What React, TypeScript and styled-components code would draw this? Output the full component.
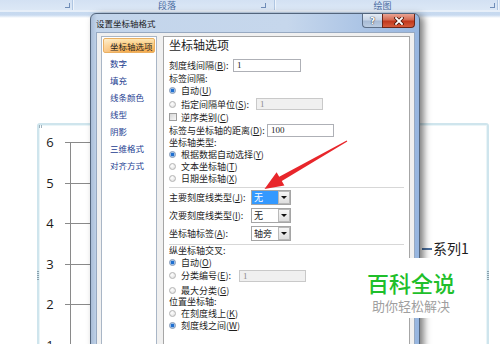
import React from 'react';
import styled, { createGlobalStyle } from 'styled-components';

const CJK = `"Noto Sans CJK SC", "Noto Sans", sans-serif`;

const GlobalStyle = createGlobalStyle`
  html, body {
    margin: 0;
    padding: 0;
    background: #fff;
  }
  body {
    font-family: ${CJK};
  }
`;

const Page = styled.div`
  position: relative;
  width: 500px;
  height: 344px;
  overflow: hidden;
  background: #fff;
`;

/* ---------- ribbon behind ---------- */

const Ribbon = styled.div`
  height: 10px;
  display: flex;
  background: linear-gradient(#d3e1f3, #dce8f6);
`;

const RibbonGroup = styled.div<{ $w: number; $pr?: number }>`
  width: ${({ $w }) => $w}px;
  flex-shrink: 0;
  display: flex;
  align-items: flex-end;
  box-sizing: border-box;
  border-right: 1px solid #afc6e2;
  box-shadow: 1px 0 0 #eef4fb;
  padding-right: ${({ $pr }) => $pr || 0}px;
`;

const RibbonLabel = styled.div`
  flex: 1;
  text-align: center;
  font-size: 9px;
  line-height: 9px;
  color: #4a6ca2;
`;

const Launcher = styled.span`
  width: 5px;
  height: 5px;
  margin: 0 2px 2px 0;
  border-right: 1px solid #6f8db8;
  border-bottom: 1px solid #6f8db8;
  box-sizing: border-box;
`;

const RibbonEdge = styled.div`
  height: 8px;
  background: linear-gradient(
    #e7eff9 0,
    #e7eff9 2px,
    #c6d9ef 2px,
    #c8daf0 5px,
    #ffffff 8px
  );
`;

/* ---------- chart behind ---------- */

const ChartFrame = styled.div`
  position: relative;
  margin: 105px 0 0 37px;
  width: 452px;
  height: 260px;
  box-sizing: border-box;
  border: 2px solid #cfe5ed;
  border-radius: 3px;
  box-shadow: inset 0 0 0 1px #eaf5f8;
  display: flex;
  background: #fff;
`;

const Handle = styled.span<{ $side: 'left' | 'right' }>`
  position: absolute;
  ${({ $side }) => ($side === 'left' ? 'left: -2px;' : 'right: -2px;')}
  top: 146px;
  width: 2px;
  height: 10px;
  background: repeating-linear-gradient(#8aa0ad 0 1px, transparent 1px 2px);
`;

const CornerDots = styled.span`
  position: absolute;
  left: 0;
  top: 0;
  width: 3px;
  height: 3px;
  background: repeating-linear-gradient(90deg, #9fb2bd 0 1px, transparent 1px 2px);
`;

const AxisBlock = styled.div`
  flex: 1;
  padding-top: 10px;
`;

const AxisRow = styled.div`
  display: flex;
  height: 40.6px;
`;

const AxisLabel = styled.div`
  width: 22px;
  flex-shrink: 0;
  text-align: center;
  font-family: "Open Sans", "Noto Sans", sans-serif;
  font-size: 13px;
  line-height: 14px;
  color: #1c1c1c;
`;

const Tick = styled.div`
  width: 5px;
  height: 1px;
  margin: 7px 0 0 4px;
  background: #8a8a8a;
`;

const GridCell = styled.div`
  flex: 1;
  margin-top: 7px;
  height: 40.6px;
  border-top: 1px solid #8a8a8a;
  border-left: 1px solid #8a8a8a;
`;

const Legend = styled.div`
  width: 68px;
  flex-shrink: 0;
  padding-top: 114px;
`;

const LegendItem = styled.div`
  display: flex;
  align-items: center;
  height: 18px;
  font-family: ${CJK};
  font-size: 14px;
  color: #1c1c1c;
`;

const LegendDash = styled.span`
  width: 10px;
  height: 2px;
  margin: 1px 1px 0 3px;
  background: #4a6f9f;
`;

/* ---------- dialog window ---------- */

const Window = styled.div`
  position: absolute;
  left: 90px;
  top: 13px;
  width: 330px;
  height: 345px;
  box-sizing: border-box;
  border: 1px solid #53657c;
  border-radius: 6px 6px 0 0;
  padding: 0 4px 0 5px;
  display: flex;
  flex-direction: column;
  background: linear-gradient(90deg, #a9bdd7 0, #c3d5eb 6px, #c6d7ec 60%, #97b6e0 100%);
  box-shadow: 4px 2px 7px rgba(0, 0, 0, 0.5);
`;

const TitleBar = styled.div`
  height: 18px;
  flex-shrink: 0;
  display: flex;
  align-items: flex-start;
`;

const Title = styled.div`
  flex: 1;
  font-size: 8.5px;
  line-height: 18px;
  color: #1b1b1b;
`;

const HelpButton = styled.div`
  width: 20px;
  height: 14px;
  box-sizing: border-box;
  border: 1px solid #5d6f88;
  border-top: none;
  border-right: none;
  border-radius: 0 0 0 4px;
  background: linear-gradient(#e2eaf4, #c9d6e7 45%, #a8bbd5 55%, #bccde2);
  display: flex;
  align-items: center;
  justify-content: center;
  font-family: "DejaVu Sans", sans-serif;
  font-size: 9px;
  font-weight: bold;
  color: #fff;
  text-shadow: 0 0 1px #1e2c40, 0 0 1px #1e2c40;
`;

const CloseButton = styled.div`
  width: 33px;
  height: 14px;
  box-sizing: border-box;
  border: 1px solid #6b2518;
  border-top: none;
  border-radius: 0 0 4px 0;
  background: linear-gradient(#eaa494, #d46a52 45%, #c0371c 55%, #d65c3c);
  display: flex;
  align-items: center;
  justify-content: center;
`;

const Body = styled.div`
  flex: 1;
  display: flex;
  gap: 6px;
  box-sizing: border-box;
  padding: 3px 4px;
  background: #f0f0f0;
  border: 1px solid #97a9c1;
  border-bottom: none;
`;

const Nav = styled.div`
  width: 56px;
  flex-shrink: 0;
  box-sizing: border-box;
  padding-top: 1px;
  background: #fff;
  border: 1px solid #a9b6c6;
`;

const NavItem = styled.div<{ $active?: boolean }>`
  box-sizing: border-box;
  height: ${({ $active }) => ($active ? 15 : 17)}px;
  margin: ${({ $active }) => ($active ? '0 1px 1px' : '0')};
  padding-left: ${({ $active }) => ($active ? 6 : 8)}px;
  border: ${({ $active }) => ($active ? '1px solid #eab062' : 'none')};
  border-radius: 2px;
  background: ${({ $active }) =>
    $active
      ? 'linear-gradient(90deg, rgba(255,255,255,0.35), rgba(255,255,255,0) 40%), linear-gradient(#fde6b4, #fbc677 50%, #f7ac4f)'
      : 'transparent'};
  display: flex;
  align-items: center;
  font-size: 8.5px;
  color: ${({ $active }) => ($active ? '#1e1e1e' : '#1b3d91')};
  white-space: nowrap;
`;

const Panel = styled.div`
  flex: 1;
  box-sizing: border-box;
  padding: 0 5px;
  background: #fff;
  border: 1px solid #a6a6a6;
  display: flex;
  flex-direction: column;
`;

const Heading = styled.div`
  height: 16px;
  font-size: 12px;
  line-height: 16px;
  color: #1e1e1e;
`;

const Row = styled.div<{ $h: number; $mt?: number }>`
  height: ${({ $h }) => $h}px;
  margin-top: ${({ $mt }) => $mt || 0}px;
  flex-shrink: 0;
  display: flex;
  align-items: center;
  font-size: 9px;
  line-height: ${({ $h }) => Math.min($h, 11)}px;
  color: #1e1e1e;
  white-space: nowrap;
`;

const Label = styled.span<{ $w?: number }>`
  ${({ $w }) => ($w ? `width: ${$w}px;` : '')}
  flex-shrink: 0;
  u {
    text-decoration: underline;
    text-underline-offset: 1px;
  }
`;

const Radio = styled.span<{ $on?: boolean }>`
  width: 7px;
  height: 7px;
  margin-right: 5px;
  flex-shrink: 0;
  box-sizing: border-box;
  border-radius: 50%;
  border: 1px solid ${({ $on }) => ($on ? '#7f95b3' : '#b3b3b3')};
  background: ${({ $on }) =>
    $on
      ? 'radial-gradient(circle, #1f6fd0 0 1.5px, #9cc0ea 2px, #e9f0f8 100%)'
      : 'radial-gradient(circle at 40% 35%, #ffffff, #dcdcdc)'};
`;

const Checkbox = styled.span`
  width: 8px;
  height: 8px;
  margin-right: 4px;
  flex-shrink: 0;
  box-sizing: border-box;
  border: 1px solid #9d9d9d;
  background: linear-gradient(135deg, #d6d6d6, #f7f7f7);
`;

const Input = styled.span<{ $w: number; $h: number; $disabled?: boolean }>`
  width: ${({ $w }) => $w}px;
  height: ${({ $h }) => $h}px;
  box-sizing: border-box;
  flex-shrink: 0;
  padding-left: 3px;
  border: 1px solid ${({ $disabled }) => ($disabled ? '#c9c9c9' : '#aeb0b6')};
  background: ${({ $disabled }) => ($disabled ? '#f0f0f0' : '#fff')};
  color: ${({ $disabled }) => ($disabled ? '#8c8c8c' : '#1e1e1e')};
  font-family: "Liberation Serif", serif;
  font-size: 9px;
  line-height: ${({ $h }) => $h - 2}px;
`;

const Select = styled.span`
  width: 40px;
  height: 15px;
  box-sizing: border-box;
  flex-shrink: 0;
  display: flex;
  border: 1px solid #a5a5a5;
  background: #fff;
`;

const SelectValue = styled.span<{ $focused?: boolean }>`
  flex: 1;
  padding-left: 2px;
  font-size: 9px;
  line-height: 13px;
  background: ${({ $focused }) => ($focused ? '#3399ff' : '#fff')};
  color: ${({ $focused }) => ($focused ? '#fff' : '#1e1e1e')};
`;

const SelectButton = styled.span`
  width: 12px;
  box-sizing: border-box;
  border: 1px solid #b9b9b9;
  background: linear-gradient(#f6f6f6, #dedede);
  display: flex;
  align-items: center;
  justify-content: center;
  &::after {
    content: '';
    border-left: 3px solid transparent;
    border-right: 3px solid transparent;
    border-top: 3px solid #111;
  }
`;

const Separator = styled.div<{ $mt: number }>`
  height: 1px;
  flex-shrink: 0;
  margin-top: ${({ $mt }) => $mt}px;
  background: #d7d7d7;
`;

/* ---------- overlays ---------- */

const Arrow = styled.svg`
  position: absolute;
  left: 0;
  top: 0;
  pointer-events: none;
`;

const Watermark = styled.div`
  position: absolute;
  left: 360px;
  top: 258px;
  width: 102px;
  height: 60px;
  box-sizing: border-box;
  padding-top: 12px;
  background: #fff;
  text-align: center;
`;

const BrandName = styled.div`
  font-size: 22px;
  line-height: 24px;
  font-weight: 500;
  color: #1fbf2b;
`;

const BrandSlogan = styled.div`
  margin-top: 5px;
  font-size: 13px;
  line-height: 14px;
  color: #9f9f9f;
`;

const navItems = ['坐标轴选项', '数字', '填充', '线条颜色', '线型', '阴影', '三维格式', '对齐方式'];
const axisValues = [6, 5, 4, 3, 2, 1];

const Mn: React.FC<{ text: string; k: string; colon?: boolean }> = ({ text, k, colon }) => (
  <>
    {text}(<u>{k}</u>){colon ? ':' : ''}
  </>
);

const DropDown: React.FC<{ value: string; focused?: boolean }> = ({ value, focused }) => (
  <Select>
    <SelectValue $focused={focused}>{value}</SelectValue>
    <SelectButton />
  </Select>
);

const App: React.FC = () => (
  <Page>
    <GlobalStyle />

    <Ribbon>
      <RibbonGroup $w={73}>
        <RibbonLabel />
        <Launcher />
      </RibbonGroup>
      <RibbonGroup $w={202} $pr={6}>
        <RibbonLabel>段落</RibbonLabel>
        <Launcher />
      </RibbonGroup>
      <RibbonGroup $w={223}>
        <RibbonLabel>绘图</RibbonLabel>
        <Launcher />
      </RibbonGroup>
    </Ribbon>
    <RibbonEdge />

    <ChartFrame>
      <CornerDots />
      <Handle $side="left" />
      <Handle $side="right" />
      <AxisBlock>
        {axisValues.map((v) => (
          <AxisRow key={v}>
            <AxisLabel>{v}</AxisLabel>
            <Tick />
            <GridCell />
          </AxisRow>
        ))}
      </AxisBlock>
      <Legend>
        <LegendItem>
          <LegendDash />
          系列1
        </LegendItem>
      </Legend>
    </ChartFrame>

    <Window>
      <TitleBar>
        <Title>设置坐标轴格式</Title>
        <HelpButton>?</HelpButton>
        <CloseButton>
          <svg width="10" height="8" viewBox="0 0 10 8">
            <path d="M2 1 L8 7 M8 1 L2 7" stroke="#4a1409" strokeWidth="3.4" strokeLinecap="square" />
            <path d="M2 1 L8 7 M8 1 L2 7" stroke="#ffffff" strokeWidth="1.8" strokeLinecap="square" />
          </svg>
        </CloseButton>
      </TitleBar>

      <Body>
        <Nav>
          {navItems.map((item, i) => (
            <NavItem key={item} $active={i === 0}>
              {item}
            </NavItem>
          ))}
        </Nav>

        <Panel>
          <Heading>坐标轴选项</Heading>

          <Row $h={14} $mt={5}>
            <Label $w={64}>
              <Mn text="刻度线间隔" k="B" colon />
            </Label>
            <Input $w={68} $h={13}>1</Input>
          </Row>
          <Row $h={12}>
            <Label>标签间隔:</Label>
          </Row>
          <Row $h={12}>
            <Radio $on />
            <Label>
              <Mn text="自动" k="U" />
            </Label>
          </Row>
          <Row $h={14} $mt={1}>
            <Radio />
            <Label $w={75}>
              <Mn text="指定间隔单位" k="S" colon />
            </Label>
            <Input $w={67} $h={12} $disabled>
              1
            </Input>
          </Row>
          <Row $h={12}>
            <Checkbox />
            <Label>
              <Mn text="逆序类别" k="C" />
            </Label>
          </Row>
          <Row $h={13} $mt={1}>
            <Label $w={98}>
              <Mn text="标签与坐标轴的距离" k="D" colon />
            </Label>
            <Input $w={67} $h={13}>100</Input>
          </Row>
          <Row $h={11}>
            <Label>坐标轴类型:</Label>
          </Row>
          <Row $h={12}>
            <Radio $on />
            <Label>
              <Mn text="根据数据自动选择" k="Y" />
            </Label>
          </Row>
          <Row $h={12}>
            <Radio />
            <Label>
              <Mn text="文本坐标轴" k="T" />
            </Label>
          </Row>
          <Row $h={12}>
            <Radio />
            <Label>
              <Mn text="日期坐标轴" k="X" />
            </Label>
          </Row>

          <Separator $mt={3} />

          <Row $h={15} $mt={2}>
            <Label $w={82}>
              <Mn text="主要刻度线类型" k="J" colon />
            </Label>
            <DropDown value="无" focused />
          </Row>
          <Row $h={15} $mt={3}>
            <Label $w={82}>
              <Mn text="次要刻度线类型" k="I" colon />
            </Label>
            <DropDown value="无" />
          </Row>
          <Row $h={15} $mt={3}>
            <Label $w={82}>
              <Mn text="坐标轴标签" k="A" colon />
            </Label>
            <DropDown value="轴旁" />
          </Row>

          <Separator $mt={3} />

          <Row $h={11}>
            <Label>纵坐标轴交叉:</Label>
          </Row>
          <Row $h={12}>
            <Radio $on />
            <Label>
              <Mn text="自动" k="O" />
            </Label>
          </Row>
          <Row $h={13} $mt={1}>
            <Radio />
            <Label $w={58}>
              <Mn text="分类编号" k="E" colon />
            </Label>
            <Input $w={67} $h={12} $disabled>
              1
            </Input>
          </Row>
          <Row $h={12} $mt={2}>
            <Radio />
            <Label>
              <Mn text="最大分类" k="G" />
            </Label>
          </Row>
          <Row $h={11}>
            <Label>位置坐标轴:</Label>
          </Row>
          <Row $h={12}>
            <Radio />
            <Label>
              <Mn text="在刻度线上" k="K" />
            </Label>
          </Row>
          <Row $h={12}>
            <Radio $on />
            <Label>
              <Mn text="刻度线之间" k="W" />
            </Label>
          </Row>
        </Panel>
      </Body>
    </Window>

    <Arrow width="500" height="344" viewBox="0 0 500 344">
      <polygon
        points="347.3,141.4 281.8,181.1 284.4,185.6 264.5,189 276.6,172.2 279.2,176.7 346.7,140.6"
        fill="#e8262b"
      />
    </Arrow>

    <Watermark>
      <BrandName>百科全说</BrandName>
      <BrandSlogan>助你轻松解决</BrandSlogan>
    </Watermark>
  </Page>
);

export default App;
